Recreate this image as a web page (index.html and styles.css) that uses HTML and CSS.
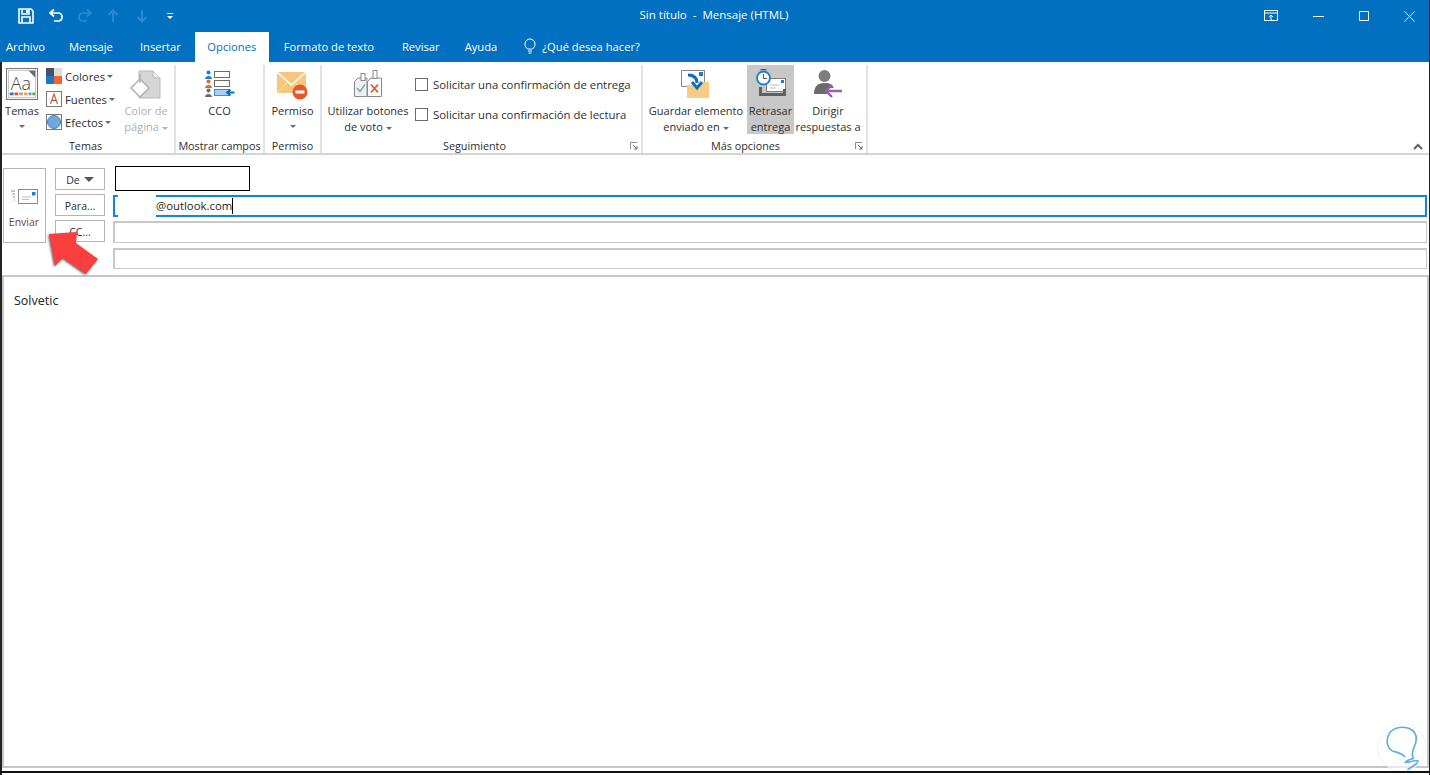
FILE: index.html
```html
<!DOCTYPE html>
<html lang="es">
<head>
    <meta charset="UTF-8">
    <meta name="viewport" content="width=device-width, initial-scale=1.0">
    <title>Sin título - Mensaje (HTML)</title>
    <link rel="stylesheet" href="styles.css">
</head>
<body>
<div class="window">

    <header class="titlebar">
        <div class="quick">
            <svg class="qa qa-save" width="16" height="16" viewBox="0 0 16 16"><path d="M1 1h12l2 2v12H1z M4 1v5h7V1 M4 15V9h8v6" fill="none" stroke="#fff" stroke-width="1.6"/><rect x="8" y="2" width="2" height="3" fill="#fff"/></svg>
            <svg class="qa qa-undo" width="16" height="16" viewBox="0 0 16 16"><path d="M6 1.500 2 5l4 3.500M2 5h8c2.500 0 4 1.700 4 4s-1.500 4-4 4H6" fill="none" stroke="#fff" stroke-width="1.700"/></svg>
            <svg class="qa qa-redo" width="16" height="16" viewBox="0 0 16 16"><path d="M10 1.500 14 5l-4 3.500M14 5H6C3.500 5 2 6.700 2 9s1.500 4 4 4h4" fill="none" stroke="#2a8ad0" stroke-width="1.700"/></svg>
            <svg class="qa qa-up" width="12" height="14" viewBox="0 0 12 14"><path d="M6 13V2M1.500 6 6 1.500 10.500 6" fill="none" stroke="#2a8ad0" stroke-width="2"/></svg>
            <svg class="qa qa-down" width="12" height="14" viewBox="0 0 12 14"><path d="M6 1v11M1.500 8 6 12.500 10.500 8" fill="none" stroke="#2a8ad0" stroke-width="2"/></svg>
            <svg class="qa qa-more" width="8" height="8" viewBox="0 0 8 8"><path d="M1 1h6v1H1z M1 4h6L4 7z" fill="#fff"/></svg>
        </div>
        <div class="doc-title">Sin título&nbsp; -&nbsp; Mensaje (HTML)</div>
        <div class="win-controls">
            <svg width="14" height="12" viewBox="0 0 14 12"><path d="M.5.500h13v10H.500z M.500 3h13" fill="none" stroke="#fff"/><path d="M7 10V5M5 7l2-2 2 2" fill="none" stroke="#fff"/></svg>
            <svg width="11" height="10" viewBox="0 0 11 10"><path d="M0 5.500h11" stroke="#fff"/></svg>
            <svg width="10" height="10" viewBox="0 0 10 10"><path d="M.500.500h9v9h-9z" fill="none" stroke="#fff"/></svg>
            <svg width="11" height="11" viewBox="0 0 11 11"><path d="M.500.500l10 10M10.500.500l-10 10" stroke="#fff"/></svg>
        </div>
    </header>

    <nav class="tabs">
        <span class="tab tab-file">Archivo</span>
        <span class="tab tab-msg">Mensaje</span>
        <span class="tab">Insertar</span>
        <span class="tab tab-active">Opciones</span>
        <span class="tab tab-format">Formato de texto</span>
        <span class="tab">Revisar</span>
        <span class="tab tab-help">Ayuda</span>
        <span class="tab tab-search">
            <svg width="12" height="16" viewBox="0 0 12 16"><path d="M3.500 11C2 9.500 1 8.300 1 6a5 5 0 0 1 10 0c0 2.300-1 3.500-2.500 5zM4 13h4M4.500 15h3" fill="none" stroke="#fff"/></svg>
            ¿Qué desea hacer?
        </span>
    </nav>

    <section class="ribbon">
        <div class="group group-temas">
            <div class="group-body">
                <div class="big big-temas">
                    <svg class="big-icon" width="32" height="32" viewBox="0 0 34 34">
                        <rect x=".5" y=".5" width="33" height="33" fill="#fff" stroke="#6d6d6d"/>
                        <rect x="2.500" y="2.500" width="29" height="29" fill="#fff" stroke="#bdbdbd"/>
                        <path d="M24 3h7v7z" fill="#5f6b76"/>
                        <text x="5" y="23" class="aa">Aa</text>
                        <rect x="4" y="26" width="4" height="3" fill="#2f75b5"/><rect x="9" y="26" width="4" height="3" fill="#e8552b"/><rect x="14" y="26" width="4" height="3" fill="#a5a5a5"/><rect x="19" y="26" width="4" height="3" fill="#f0a64a"/><rect x="24" y="26" width="3" height="3" fill="#4a9fd8"/><rect x="28" y="26" width="3" height="3" fill="#5fa83c"/>
                    </svg>
                    <span class="big-label">Temas</span>
                    <i class="caret"></i>
                </div>
                <div class="theme-list">
                    <div class="theme-item">
                        <svg width="16" height="16" viewBox="0 0 16 16"><rect width="8" height="8" fill="#44546a"/><rect x="8" width="8" height="8" fill="#dcdcdc"/><rect y="8" width="8" height="8" fill="#1b78c4"/><rect x="8" y="8" width="8" height="8" fill="#f0652f"/></svg>
                        Colores <i class="caret caret-inline"></i>
                    </div>
                    <div class="theme-item">
                        <svg width="16" height="16" viewBox="0 0 16 16"><rect x=".5" y=".5" width="15" height="15" fill="#fff" stroke="#7a7a7a"/><path d="M4.500 13 8 3l3.500 10" fill="none" stroke="#e8622c" stroke-width="1.300"/><path d="M6 9.500h4" stroke="#2f75b5" stroke-width="1.300"/></svg>
                        Fuentes <i class="caret caret-inline"></i>
                    </div>
                    <div class="theme-item">
                        <svg width="16" height="16" viewBox="0 0 16 16"><rect x=".5" y=".5" width="15" height="15" fill="#fff" stroke="#7a7a7a"/><circle cx="8" cy="8" r="6.500" fill="#6fa8dc" stroke="#3f86c4"/></svg>
                        Efectos <i class="caret caret-inline"></i>
                    </div>
                </div>
                <div class="big big-color disabled">
                    <svg class="big-icon" width="32" height="32" viewBox="0 0 32 32"><path d="M9 2h14l7 7v20H9z" fill="#d6d6d6" stroke="#b8b8b8"/><path d="M23 2v7h7" fill="#efefef" stroke="#b8b8b8"/><path d="M1 19 10 10l9 9-9 9z" fill="#fff" stroke="#b0b0b0" stroke-width="1.500"/><path d="M10 5v9" stroke="#b0b0b0" stroke-width="1.500"/></svg>
                    <span class="big-label">Color de<br>página <i class="caret caret-inline"></i></span>
                </div>
            </div>
            <div class="group-label">Temas</div>
        </div>

        <div class="group group-campos">
            <div class="group-body">
                <div class="big big-cco">
                    <svg class="big-icon" width="30" height="28" viewBox="0 0 30 28">
                        <circle cx="3.500" cy="2.500" r="2" fill="#1c7cd0"/><path d="M0 9c0-4 7-4 7 0z" fill="#1c7cd0"/>
                        <circle cx="3.500" cy="11.500" r="2" fill="#e8622c"/><path d="M0 18c0-4 7-4 7 0z" fill="#e8622c"/>
                        <circle cx="3.500" cy="20.500" r="2" fill="#6b6b6b"/><path d="M0 27c0-4 7-4 7 0z" fill="#6b6b6b"/>
                        <rect x="9.500" y="1.500" width="15" height="6" fill="#fff" stroke="#6b6b6b"/>
                        <rect x="9.500" y="10.500" width="15" height="6" fill="#fff" stroke="#6b6b6b"/>
                        <rect x="9.500" y="19.500" width="15" height="6" fill="#a9d0ee" stroke="#3d8bc9"/>
                        <path d="M29.500 22.500H23M25.500 19.500l-3.500 3 3.500 3" fill="none" stroke="#0f6fbf" stroke-width="2"/>
                    </svg>
                    <span class="big-label">CCO</span>
                </div>
            </div>
            <div class="group-label">Mostrar campos</div>
        </div>

        <div class="group group-permiso">
            <div class="group-body">
                <div class="big big-permiso">
                    <svg class="big-icon" width="32" height="30" viewBox="0 0 32 30"><rect y="1" width="29" height="21" fill="#f8c77e"/><path d="M0 1 14.500 14 29 1" fill="none" stroke="#fff" stroke-width="1.500"/><path d="M0 22l11-11M29 22 18 11" stroke="#fbe0b5"/><circle cx="23" cy="21" r="7.500" fill="#e8562a"/><rect x="18.500" y="19.500" width="9" height="3" fill="#fff"/></svg>
                    <span class="big-label">Permiso</span>
                    <i class="caret"></i>
                </div>
            </div>
            <div class="group-label">Permiso</div>
        </div>

        <div class="group group-seguimiento">
            <div class="group-body">
                <div class="big big-voto">
                    <svg class="big-icon" width="30" height="28" viewBox="0 0 30 28"><path d="M1.500 11.500 5 8h9v18.500H1.500z" fill="#f0f0f0" stroke="#8a8a8a"/><path d="M14.500 11.500 18 8h10.500v18.500H14.500z" fill="#fff" stroke="#8a8a8a"/><rect x="8" y="3.500" width="4" height="7" fill="#fff" stroke="#8a8a8a"/><rect x="20" y=".5" width="4" height="8" fill="#fff" stroke="#8a8a8a"/><path d="M4 18l3 3.500 5-7" fill="none" stroke="#6bb5a8" stroke-width="1.500"/><path d="M18 14.500l7 8M25 14.500l-7 8" stroke="#e8562a" stroke-width="1.800"/></svg>
                    <span class="big-label">Utilizar botones<br>de voto <i class="caret caret-inline"></i></span>
                </div>
                <div class="checks">
                    <label class="check"><span class="checkbox"></span>Solicitar una confirmación de entrega</label>
                    <label class="check"><span class="checkbox"></span>Solicitar una confirmación de lectura</label>
                </div>
            </div>
            <div class="group-label">Seguimiento</div>
            <svg class="launcher" width="8" height="8" viewBox="0 0 8 8"><path d="M.5 7V.5H7" fill="none" stroke="#8a8a8a"/><path d="M3 3l4 4M7 4v3H4" fill="none" stroke="#6b6b6b"/></svg>
        </div>

        <div class="group group-mas">
            <div class="group-body">
                <div class="big big-guardar">
                    <svg class="big-icon" width="30" height="30" viewBox="0 0 30 30"><rect x=".5" y="1.500" width="23" height="16" fill="#fff" stroke="#8a8a8a"/><rect x="18" y="3" width="4" height="4" fill="#1c7cd0"/><path d="M6 16h22v13H6z" fill="#f9cc85"/><path d="M20 16l2-3h6v3z" fill="#f9cc85"/><path d="M7 6c5 0 9 2 9 8M11 13l5 6 5-6" fill="none" stroke="#0f6fbf" stroke-width="3"/></svg>
                    <span class="big-label">Guardar elemento<br>enviado en <i class="caret caret-inline"></i></span>
                </div>
                <div class="big big-retrasar">
                    <svg class="big-icon" width="32" height="30" viewBox="0 0 32 30"><rect x="11.500" y="9.500" width="19" height="13" fill="#fff" stroke="#7d7d7d"/><rect x="26" y="11" width="3" height="3" fill="#1c7cd0"/><path d="M15 16h9M15 19h6" stroke="#bdbdbd"/><path d="M4 18h3v6h21v-4h3v7H4z" fill="#5f6062"/><circle cx="8.500" cy="9" r="6.500" fill="#fff" stroke="#1c7cd0" stroke-width="1.800"/><path d="M8.500 5v4.500H12" fill="none" stroke="#555"/><path d="M5.500.5h6" stroke="#555" stroke-width="1.500"/></svg>
                    <span class="big-label">Retrasar<br>entrega</span>
                </div>
                <div class="big big-dirigir">
                    <svg class="big-icon" width="30" height="30" viewBox="0 0 30 30"><circle cx="11.500" cy="7" r="6" fill="#7d7d7d"/><path d="M1 25c0-8 4-11 10.500-11S19 16 21 19H14v6z" fill="#6b6b6b"/><path d="M29 22H13M19 16l-6 6 6 6" fill="none" stroke="#9a5fb4" stroke-width="2.400"/></svg>
                    <span class="big-label">Dirigir<br>respuestas a</span>
                </div>
            </div>
            <div class="group-label">Más opciones</div>
            <svg class="launcher" width="8" height="8" viewBox="0 0 8 8"><path d="M.5 7V.5H7" fill="none" stroke="#8a8a8a"/><path d="M3 3l4 4M7 4v3H4" fill="none" stroke="#6b6b6b"/></svg>
        </div>

        <svg class="collapse" width="10" height="7" viewBox="0 0 10 7"><path d="M1 6l4-4 4 4" fill="none" stroke="#5f6062" stroke-width="2"/></svg>
    </section>

    <section class="compose">
        <div class="send">
            <svg width="30" height="16" viewBox="0 0 30 16"><rect x="9.500" y=".5" width="19" height="14" fill="#fff" stroke="#8a8a8a"/><rect x="23" y="3" width="3.500" height="3.500" fill="#1c7cd0"/><path d="M13 8h9M13 10.500h7" stroke="#bdbdbd"/><path d="M2 2h4M3 5h3M4 8h2M5 11h1" stroke="#8a8a8a"/></svg>
            <span>Enviar</span>
        </div>
        <div class="addr-btns">
            <div class="addr-btn">De <i class="caret-de"></i></div>
            <div class="addr-btn">Para...</div>
            <div class="addr-btn">CC...</div>
        </div>
        <div class="fields">
            <div class="from-box"></div>
            <div class="field field-to"><span class="mask"></span><span class="to-text">@outlook.com</span></div>
            <div class="field"></div>
            <div class="field field-last"></div>
        </div>
    </section>

    <main class="message">Solvetic</main>
</div>

<svg class="arrow" width="60" height="50" viewBox="0 0 60 50">
    <polygon points="5,4 33,2 32,13 54,29 42,44 19,28 11,36" fill="#fb3e3e"/>
</svg>

<svg class="watermark" width="100" height="85" viewBox="0 0 300 255">
    <circle cx="215" cy="172" r="72" fill="#fff" fill-opacity=".6" stroke="#e8ecee" stroke-width="2"/>
    <path d="M224 200C215 188 200 188 186 182 170 172 167 150 178 130 190 112 225 105 246 120 264 134 260 155 252 172 246 186 245 195 250 205 240 208 228 212 226 217 235 220 255 208 264 212 262 224 245 230 234 238" fill="none" stroke="#62aee0" stroke-width="5" stroke-linecap="round"/>
</svg>
</body>
</html>
```

FILE: styles.css
```css
*{
    box-sizing: border-box;
}

html,body{
    margin: 0;
    height: 100%;
    overflow: hidden;
}

body{
    background: #fff;
    font-family: "Open Sans", "Noto Sans", sans-serif;
    font-size: 11.35px;
    color: #2e2e2e;
}

.window{
    height: 775px;
    display: flex;
    flex-direction: column;
    border-left: 2px solid #222;
    border-right: 1px solid #222;
}

/* barra de titulo */
.titlebar{
    height: 32px;
    margin-left: -2px;
    background: #0170c1;
    color: #fff;
    display: flex;
    align-items: center;
}

.quick{
    display: flex;
    align-items: center;
    width: 530px;
    padding-left: 18px;
}

.qa-undo{
    margin-left: 14px;
}
.qa-redo{
    margin-left: 13px;
}
.qa-up{
    margin-left: 14px;
}
.qa-down{
    margin-left: 17px;
}
.qa-more{
    margin-left: 18px;
}

.doc-title{
    width: 368px;
    text-align: center;
    padding-bottom: 4px;
    font-size: 11.5px;
}

.win-controls{
    margin-left: auto;
    display: flex;
    align-items: center;
    gap: 35px;
    padding-right: 14px;
}

/* pestanas */
.tabs{
    height: 30px;
    margin-left: -2px;
    background: #0170c1;
    display: flex;
    color: #fff;
    font-size: 11.2px;
}

.tab{
    display: flex;
    align-items: center;
    gap: 6px;
    padding: 0 13px 2px;
}

.tab-file{
    padding-left: 6px;
    padding-right: 11px;
}

.tab-msg{
    padding-right: 14px;
}

.tab-active{
    background: #fff;
    color: #0170c1;
    margin-left: 1px;
    padding: 0 12.5px 2px;
}

.tab-format{
    padding-left: 15px;
    padding-right: 15px;
}

.tab-help{
    padding-left: 12px;
}

.tab-search{
    padding-left: 14px;
}

/* cinta */
.ribbon{
    height: 93px;
    padding-top: 3px;
    display: flex;
    position: relative;
    border-bottom: 2px solid #d4d4d4;
}

.group{
    position: relative;
    display: flex;
    flex-direction: column;
    border-right: 2px solid #e2e2e2;
    height: 88px;
}

.group-temas{
    width: 174px;
}
.group-campos{
    width: 89px;
}
.group-permiso{
    width: 57px;
}
.group-seguimiento{
    width: 321px;
}
.group-mas{
    width: 225px;
}

.group-body{
    flex: none;
    height: 72px;
    display: flex;
}

.group-label{
    height: 16px;
    text-align: center;
    line-height: 18px;
    font-size: 10.8px;
}

.group-temas .group-label{
    padding-right: 5px;
}
.group-seguimiento .group-label{
    padding-right: 14px;
}
.group-mas .group-label{
    padding-right: 18px;
}

.launcher{
    position: absolute;
    right: 3px;
    bottom: 3px;
}

.collapse{
    position: absolute;
    right: 6px;
    bottom: 3px;
}

.big{
    display: flex;
    flex-direction: column;
    align-items: center;
    text-align: center;
    line-height: 16px;
    font-size: 11px;
    white-space: nowrap;
}

.big-icon{
    flex: none;
}

.caret{
    width: 0;
    height: 0;
    margin-top: 6px;
    border: 3px solid transparent;
    border-top: 3px solid #6b6b6b;
    border-bottom: 0;
}

.caret-inline{
    display: inline-block;
    vertical-align: middle;
    margin-top: 0;
}

.disabled,
.disabled .caret-inline{
    color: #b0b0b0;
    border-top-color: #b0b0b0;
}

.big-temas{
    width: 36px;
    margin-left: 2px;
    padding-top: 3px;
}
.big-temas .big-label{
    margin-top: 3px;
}

.aa{
    font-family: "Open Sans", sans-serif;
    font-size: 19px;
    font-weight: 300;
    fill: #444;
}

.theme-list{
    margin-left: 6px;
    width: 77px;
    display: flex;
    flex-direction: column;
    padding-top: 3px;
    gap: 7px;
}

.theme-item{
    height: 16px;
    display: flex;
    align-items: center;
    gap: 3px;
}

.theme-item .caret-inline{
    margin-left: -1px;
}

.big-color{
    width: 46px;
    padding-top: 4px;
}
.big-color .big-label{
    margin-top: 2px;
}

.big-cco{
    width: 87px;
    padding-top: 5px;
}
.big-cco .big-label{
    margin-top: 5px;
}

.big-permiso{
    width: 55px;
    padding-top: 6px;
}
.big-permiso .big-label{
    margin-top: 2px;
}

.big-voto{
    width: 92px;
    padding-top: 5px;
}
.big-voto .big-label{
    margin-top: 5px;
}

.checks{
    display: flex;
    flex-direction: column;
    gap: 13px;
    padding-top: 11px;
    margin-left: 1px;
}

.check{
    display: flex;
    align-items: center;
    gap: 5px;
    height: 17px;
    white-space: nowrap;
}

.checkbox{
    width: 13px;
    height: 13px;
    border: 1px solid #6b6b6b;
    background: #fff;
}

.big-guardar{
    width: 102px;
    padding-top: 4px;
    margin-left: 2px;
}
.big-guardar .big-label{
    margin-top: 4px;
}

.big-retrasar{
    width: 47px;
    height: 69px;
    background: #c8c8c8;
    padding-top: 4px;
}
.big-retrasar .big-label{
    margin-top: 4px;
}

.big-dirigir{
    width: 68px;
    padding-top: 4px;
}
.big-dirigir .big-label{
    margin-top: 4px;
}

/* cabecera del mensaje */
.compose{
    height: 120px;
    padding: 13px 2px 0 1px;
    display: flex;
    flex: none;
}

.send{
    width: 43px;
    height: 75px;
    border: 1px solid #b5b5b5;
    display: flex;
    flex-direction: column;
    align-items: center;
    gap: 10px;
    padding-top: 20px;
    padding-right: 1px;
    font-size: 10.5px;
}

.send span{
    color: #7a3b3b;
}

.addr-btns{
    margin-left: 9px;
    width: 50px;
    display: flex;
    flex-direction: column;
    gap: 4px;
}

.addr-btn{
    height: 22px;
    padding-top: 1px;
    border: 1px solid #b5b5b5;
    display: flex;
    align-items: center;
    justify-content: center;
    gap: 4px;
    font-size: 10.5px;
}

.caret-de{
    width: 0;
    height: 0;
    border: 5px solid transparent;
    border-top: 5px solid #555;
    border-bottom: 0;
}

.fields{
    flex: 1;
    margin-left: 8px;
    display: flex;
    flex-direction: column;
    gap: 4px;
}

.from-box{
    width: 135px;
    height: 25px;
    margin: -2px 0 0 2px;
    border: 1px solid #000;
    background: #fff;
}

.field{
    height: 22px;
    border: 2px solid #c8c8c8;
    border-bottom-width: 1px;
    border-right-width: 1px;
    position: relative;
}

.field-last{
    height: 21px;
    margin-top: 1px;
}

.field-to{
    border: 2px solid #0f86d8;
    display: flex;
    align-items: center;
    padding-left: 41px;
    font-weight: 500;
    color: #1f1f1f;
}

.mask{
    position: absolute;
    left: 3px;
    top: -2px;
    width: 38px;
    height: 22px;
    background: #fff;
}

.to-text{
    border-right: 1px solid #000;
    line-height: 15px;
    padding-bottom: 1px;
}

/* cuerpo */
.message{
    height: 493px;
    flex: none;
    border: 2px solid #c6c6c6;
    padding: 15px 10px;
    font-size: 12.5px;
    color: #222;
}

/* sobre el contenido */
.arrow{
    position: absolute;
    left: 44px;
    top: 230px;
    filter: drop-shadow(-1px 1px 1px rgba(0,0,0,.6));
}

.watermark{
    position: absolute;
    left: 1330px;
    top: 690px;
}

body::after{
    content: "";
    position: absolute;
    left: 0;
    right: 0;
    top: 771px;
    height: 2px;
    background: #111;
}
```
